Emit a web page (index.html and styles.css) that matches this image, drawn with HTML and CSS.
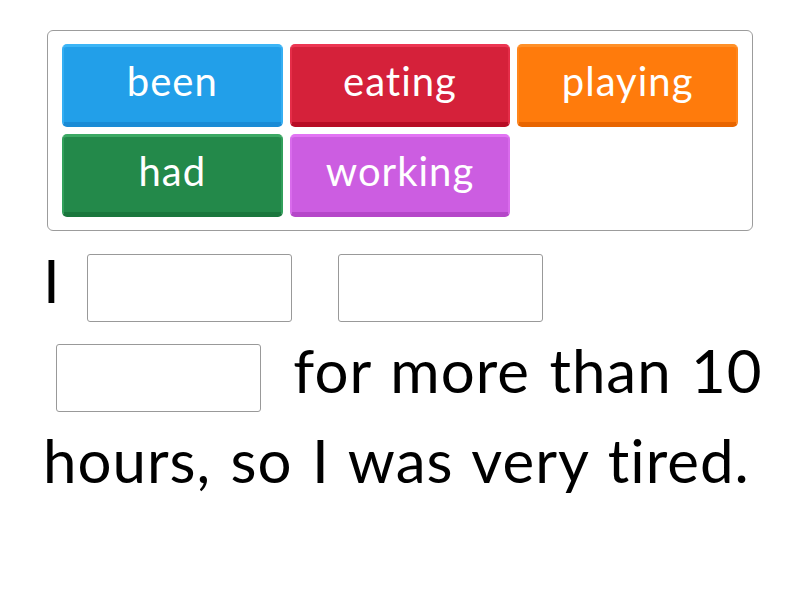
FILE: index.html
```html
<!DOCTYPE html>
<html>
<head>
<meta charset="utf-8">
<link rel="stylesheet" href="styles.css">
</head>
<body>
<div class="page">
  <div class="bank">
    <div class="tile blue">been</div>
    <div class="tile red">eating</div>
    <div class="tile orange">playing</div>
    <div class="tile green">had</div>
    <div class="tile purple">working</div>
  </div>
  <div class="sentence"><span class="lead">I</span> <span class="blank"></span> <span class="blank"></span> <span class="blank"></span> for more than 10 hours, so I was very tired.</div>
</div>
</body>
</html>
```
FILE: styles.css
```css
html, body {
  margin: 0;
  padding: 0;
  background: #fff;
}
.page {
  width: 800px;
  height: 600px;
  padding: 30px 0 0 43px;
  box-sizing: border-box;
  font-family: Lato, "Open Sans", sans-serif;
  font-variant-ligatures: none;
}
.bank {
  margin-left: 4px;
  width: 706px;
  box-sizing: border-box;
  border: 1px solid #9c9c9c;
  border-radius: 6px;
  padding: 13px 14px;
  display: grid;
  grid-template-columns: 1fr 1fr 1fr;
  grid-auto-rows: 83px;
  gap: 7px;
}
.tile {
  box-sizing: border-box;
  border-radius: 5px;
  border-style: solid;
  border-width: 3px 2px 5px 2px;
  color: #fff;
  font-size: 40px;
  letter-spacing: 1px;
  display: flex;
  align-items: center;
  justify-content: center;
  padding-bottom: 7px;
}
.blue { background: #229fe9; border-color: #3cb5f6 #35aef2 #1a8bd6 #35aef2; }
.red { background: #d5213a; border-color: #ec3652 #e52d48 #b80c25 #e52d48; }
.orange { background: #ff7b0c; border-color: #ff9028 #ff861c #e86500 #ff861c; }
.green { background: #23894a; border-color: #3ca964 #32a05b #1a773d #32a05b; }
.purple { background: #cc5de1; border-color: #e274f4 #d96bec #b547c9 #d96bec; }
.sentence {
  margin-top: 4px;
  width: 730px;
  font-size: 60px;
  letter-spacing: 1px;
  word-spacing: 3px;
  line-height: 90px;
  color: #000;
}
.lead {
  margin-right: -6px;
}
.blank {
  display: inline-block;
  width: 205px;
  height: 68px;
  box-sizing: border-box;
  border: 1px solid #999;
  border-radius: 3px;
  margin: 0 13px;
  vertical-align: middle;
}
```
